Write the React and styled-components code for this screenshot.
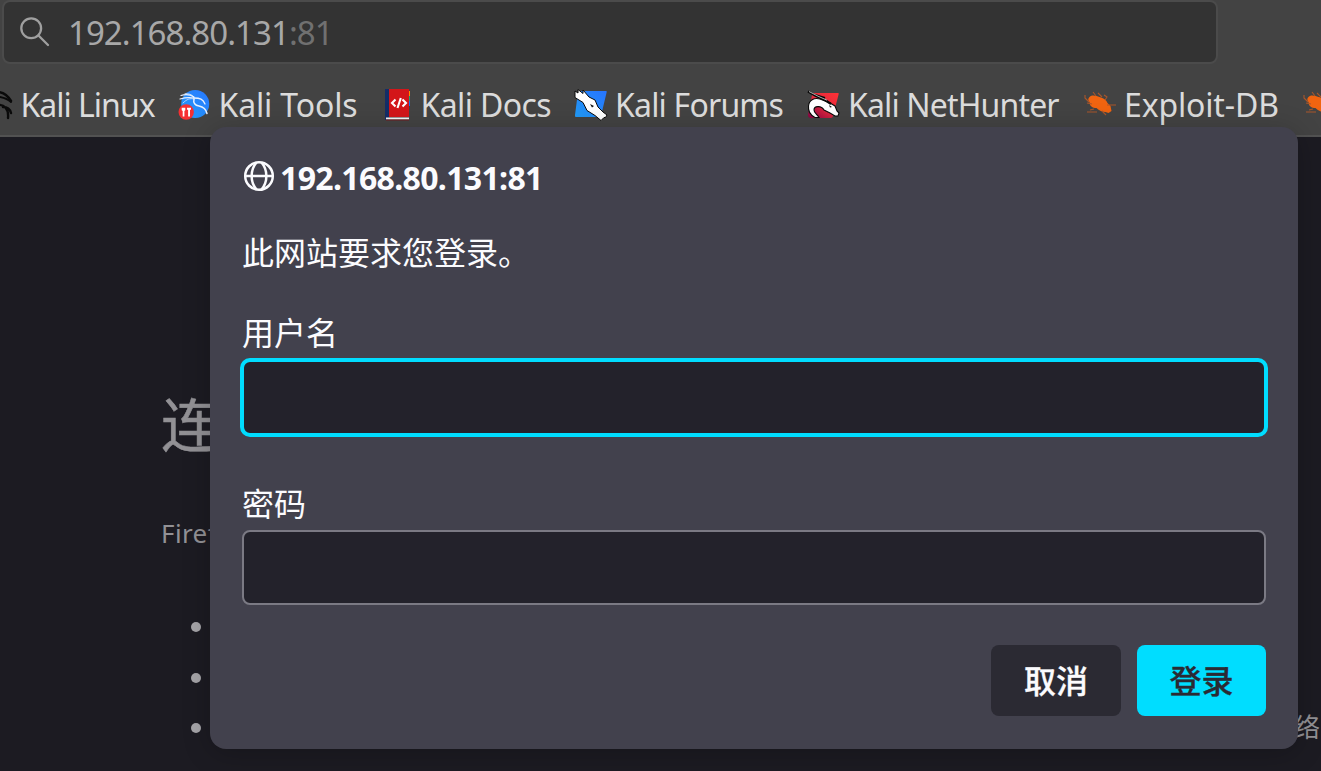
import React from "react";
import styled, { createGlobalStyle } from "styled-components";

const Global = createGlobalStyle`
  * { box-sizing: border-box; }
  body { margin: 0; overflow: hidden; background: #1c1b22; }
`;

const Browser = styled.div`
  position: relative;
  width: 1321px;
  height: 771px;
  overflow: hidden;
  background: #1c1b22;
  font-family: "Noto Sans", "Noto Sans CJK SC", sans-serif;
`;

const Toolbar = styled.header`
  height: 137px;
  background: #434343;
  border-bottom: 2px solid #525252;
`;

const UrlBar = styled.div`
  display: flex;
  align-items: center;
  width: 1216px;
  height: 64px;
  margin-left: 2px;
  padding-left: 16px;
  gap: 18px;
  background: #333333;
  border: 2px solid #4b4b4b;
  border-radius: 8px;
`;

const Address = styled.div`
  padding-top: 2px;
  font-size: 33px;
  line-height: 60px;
  letter-spacing: ${(p) => p.$tracking}px;
  color: #a8a8a8;
  white-space: nowrap;
  span { color: #707070; }
`;

const Bookmarks = styled.nav`
  display: grid;
  grid-template-columns: 198px 206px 190px 233px 277px 219px 60px;
  width: 1383px;
  height: 71px;
  padding-top: 16px;
  margin-left: -20px;
`;

const Bookmark = styled.div`
  display: flex;
  align-items: center;
  height: 48px;
  white-space: nowrap;
  font-size: 32px;
  letter-spacing: ${(p) => p.$tracking || 0}px;
  color: #dcdcdc;
  svg { flex: none; width: 34px; height: 34px; margin-right: ${(p) => p.$gap}px; overflow: visible; }
`;

const PageBody = styled.main`
  padding: 245px 0 0 161px;
  color: #929195;
`;

const PageTitle = styled.h1`
  margin: 0;
  font-family: "Noto Sans CJK SC", sans-serif;
  font-size: 58px;
  font-weight: 400;
  -webkit-text-stroke: 0.5px #929195;
  line-height: 80px;
`;

const PageText = styled.p`
  margin: 51px 0 0;
  font-size: 26px;
  line-height: 40px;
  letter-spacing: 0.4px;
`;

const Tips = styled.ul`
  margin: 49px 0 0;
  padding: 0 0 0 30px;
  list-style: none;
`;

const Tip = styled.li`
  display: flex;
  align-items: center;
  justify-content: space-between;
  height: 50.4px;
  font-size: 26px;
  &::before {
    content: "";
    width: 10px;
    height: 10px;
    border-radius: 50%;
    background: #a5a4a8;
  }
`;

const TipText = styled.span`
  width: 27px;
  padding-bottom: 4px;
  font-family: "Noto Sans CJK SC", sans-serif;
  line-height: 40px;
  white-space: nowrap;
`;

const Dialog = styled.section`
  position: absolute;
  left: 210px;
  top: 127px;
  width: 1088px;
  height: 622px;
  padding: 25px 32px 33px;
  display: flex;
  flex-direction: column;
  border-radius: 16px;
  background: #42414d;
  box-shadow: 0 4px 28px rgba(0, 0, 0, 0.22);
  color: #fbfbfe;
`;

const Origin = styled.div`
  display: flex;
  align-items: center;
  height: 48px;
  gap: 5px;
  padding-left: 1px;
  font-size: 32px;
  font-weight: 700;
  letter-spacing: ${(p) => p.$tracking}px;
  svg { width: 32px; height: 32px; }
`;

const OriginText = styled.span`
  padding-top: 2px;
`;

const Message = styled.p`
  margin: 27px 0 0;
  font-family: "Noto Sans CJK SC", sans-serif;
  font-size: 32px;
  line-height: 48px;
`;

const Label = styled.label`
  margin-top: ${(p) => p.$top}px;
  font-family: "Noto Sans CJK SC", sans-serif;
  font-size: 32px;
  line-height: 48px;
`;

const Field = styled.div`
  flex: none;
  height: ${(p) => (p.$focused ? 79 : 75)}px;
  margin: ${(p) => (p.$focused ? "3px -2px 0" : "4px 0 0")};
  border: ${(p) => (p.$focused ? "4px solid #00ddff" : "2px solid #7b7a84")};
  border-radius: ${(p) => (p.$focused ? 10 : 8)}px;
  background: #23222b;
`;

const Actions = styled.div`
  display: flex;
  justify-content: flex-end;
  gap: 16px;
  margin-top: auto;
`;

const Button = styled.button`
  width: ${(p) => (p.$primary ? 129 : 130)}px;
  height: 71px;
  padding: 0 0 3px;
  border: 0;
  border-radius: 8px;
  font-family: "Noto Sans CJK SC", sans-serif;
  font-size: 32px;
  font-weight: 500;
  -webkit-text-stroke: 0.3px currentColor;
  background: ${(p) => (p.$primary ? "#00ddff" : "#2b2a33")};
  color: ${(p) => (p.$primary ? "#2b2a33" : "#fbfbfe")};
`;

const SearchIcon = () => (
  <svg width="30" height="30" viewBox="0 0 30 30" fill="none" stroke="#a0a0a0" strokeWidth="2.3" strokeLinecap="round">
    <circle cx="11.2" cy="11.2" r="9.9" />
    <path d="M18.5 18.5 28 28" />
  </svg>
);

const GlobeIcon = () => (
  <svg viewBox="0 0 32 32" fill="none" stroke="#fbfbfe" strokeWidth="2.5">
    <circle cx="16" cy="16" r="13.8" />
    <path d="M2 16h28M13.5 2.5C7 10 7 22 13.5 29.5M18.5 2.5C25 10 25 22 18.5 29.5" />
  </svg>
);

const KaliIcon = () => (
  <svg viewBox="0 0 34 34" fill="none" stroke="#0a0a0a" strokeLinecap="round">
    <path strokeWidth="2.5" d="M17 5c7 0 11 4 14 9" />
    <path strokeWidth="1.8" d="M20 10c5 1 8 2 11 5" />
    <path strokeWidth="2.4" d="M18 18c6-1 11 4 10 13M23 20c5 0 7 2 8 6" />
  </svg>
);

const ToolsIcon = () => (
  <svg viewBox="0 0 34 34">
    <defs>
      <linearGradient id="tools" x1="1" y1="0" x2="0" y2="1">
        <stop stopColor="#2877ff" /><stop offset="1" stopColor="#239cf8" />
      </linearGradient>
    </defs>
    <circle cx="17.2" cy="17" r="14" fill="url(#tools)" />
    <g fill="none" stroke="#e8f1ff" strokeLinecap="round">
      <path strokeWidth="1.2" d="M3 8.500c5-1.500 9-1 13 1.500M2 12c5-1.500 9-2 14-1" />
      <path strokeWidth=".7" d="M7 6.500c4 0 7 1 9 3.500M5 16c4-4 7-5 11-4" />
      <path strokeWidth="1.5" d="M16 12c-1 4 1 6.500 5 7 5 1 7 3 8 7.500" />
      <path strokeWidth="1.3" d="M16 11c6 0 9 1 11 6" />
    </g>
    <circle cx="8.2" cy="25" r="7.7" fill="#f52f32" />
    <path d="M3.7 20.700h3.600v2.500l-.9.8V29.500H4.700V24l-1-.8zM9 20.700h4v2h-1v6.800h-1.900v-6.800H9z" fill="#fff" />
  </svg>
);

const DocsIcon = () => (
  <svg viewBox="0 0 34 34">
    <path d="M23 4h3v5h-3z" fill="#ff9100" /><path d="M23 9h3v5h-3z" fill="#1c9e75" />
    <path d="M23 14h3v5h-3z" fill="#1671ee" />
    <path d="M1 2h24v26H5v5H1z" fill="#142d67" />
    <path d="M5 2h20v28H5z" fill="#d31619" />
    <path d="M2 30.500h23v2H2z" fill="#f5f5f5" /><path d="M2 32.500h23v1H2z" fill="#751c20" />
    <path d="m11.500 12.500-3.500 3.500 3.500 3.500M18.500 12.500l3.500 3.500-3.500 3.500M16.800 11l-3.300 10" fill="none" stroke="#fff" strokeWidth="2.1" />
  </svg>
);

const ForumsIcon = () => (
  <svg viewBox="0 0 34 34">
    <defs>
      <linearGradient id="forums" x1="1" y1="0" x2="0" y2="1">
        <stop stopColor="#2774ff" /><stop offset="1" stopColor="#219bf6" />
      </linearGradient>
    </defs>
    <path d="M5 4h27q1 0 .7 1l-5.500 23q-.5 2-2 2H2q-1.500 0-1-2L4 5q0-1 1-1z" fill="url(#forums)" />
    <path d="M1 4 4 6V2.500l5 4V3l6 7 6 3 3 7 5 5 4 3-1.500 2.500H30l-3 3-6-5-8-5-4-8-8-5z" fill="#fff" stroke="#090909" strokeWidth="1" strokeLinejoin="round" />
    <path d="m16 17 4 2-2 1.500z" fill="#111" />
  </svg>
);

const HunterIcon = () => (
  <svg viewBox="0 0 34 34">
    <defs>
      <linearGradient id="hunter" x1="1" y1="0" x2="0" y2="1">
        <stop stopColor="#ff3135" /><stop offset=".5" stopColor="#e32a3d" /><stop offset="1" stopColor="#880044" />
      </linearGradient>
    </defs>
    <path d="M7 6h24q1 0 .7 1L26 29q-.5 2-2 2H4q-3 0-3-3L5 8q0-2 2-2z" fill="url(#hunter)" />
    <path d="M8 30.500C3 28 1 24 1.500 19 2 13 7 10.500 13 12l5 2 5 2 5 3 2 5 2 2-1 3h-3l-5-3-6-3c-3-5-10-4-10 0 0 3 3 4 5 7.500z" fill="#fff" stroke="#090909" strokeWidth="1.1" />
    <path d="M1 4.500 9 9l9 4 6 4M8 8l10 3" fill="none" stroke="#080808" strokeWidth="2.200" />
    <path d="M2 4.500l9 4.700 9 4" fill="none" stroke="#ddd" strokeWidth=".8" />
    <path d="m22 18 3 2-2 .5z" fill="#111" />
  </svg>
);

const ExploitIcon = () => (
  <svg viewBox="0 0 34 34">
    <path d="M5.500 10c3-3 7-1 10 0 4 1 7 3 8 6l3 3 1 5-3 2-3-1c-4 0-7-2-9-4-4 0-7-2-7-6-2-2-1-4 0-5z" fill="#f16410" />
    <g fill="none" stroke="#a9562a" strokeWidth="1.1">
      <path d="M5 15 1 11V8M8 17l-5-1M10 22l-4 1M13 25H3M18 24l4 4M12 9 9 5M18 10l-4-4M21 13l2-3-3-2M23 18h9" />
    </g>
  </svg>
);

const bookmarks = [
  { title: "Kali Linux", Icon: KaliIcon, gap: 6.5, tracking: -1 },
  { title: "Kali Tools", Icon: ToolsIcon, gap: 6.5, tracking: -0.15 },
  { title: "Kali Docs", Icon: DocsIcon, gap: 2.5, tracking: -0.6 },
  { title: "Kali Forums", Icon: ForumsIcon, gap: 7, tracking: -0.8 },
  { title: "Kali NetHunter", Icon: HunterIcon, gap: 7, tracking: -0.85 },
  { title: "Exploit-DB", Icon: ExploitIcon, gap: 6, tracking: -0.15 },
  { title: "", Icon: ExploitIcon, gap: 0, tracking: 0 },
];

export default function App() {
  return (
    <Browser>
      <Global />
      <Toolbar>
        <UrlBar>
          <SearchIcon />
          <Address $tracking={-0.95}>192.168.80.131<span>:81</span></Address>
        </UrlBar>
        <Bookmarks>
          {bookmarks.map(({ title, Icon, gap, tracking }, i) => (
            <Bookmark key={i} $gap={gap} $tracking={tracking}>
              <Icon />
              {title}
            </Bookmark>
          ))}
        </Bookmarks>
      </Toolbar>
      <PageBody>
        <PageTitle>连</PageTitle>
        <PageText>Firef</PageText>
        <Tips>
          <Tip />
          <Tip />
          <Tip><TipText>络.</TipText></Tip>
        </Tips>
      </PageBody>
      <Dialog>
        <Origin $tracking={-0.66}>
          <GlobeIcon />
          <OriginText>192.168.80.131:81</OriginText>
        </Origin>
        <Message>此网站要求您登录。</Message>
        <Label $top={32}>用户名</Label>
        <Field $focused />
        <Label $top={41}>密码</Label>
        <Field />
        <Actions>
          <Button>取消</Button>
          <Button $primary>登录</Button>
        </Actions>
      </Dialog>
    </Browser>
  );
}
